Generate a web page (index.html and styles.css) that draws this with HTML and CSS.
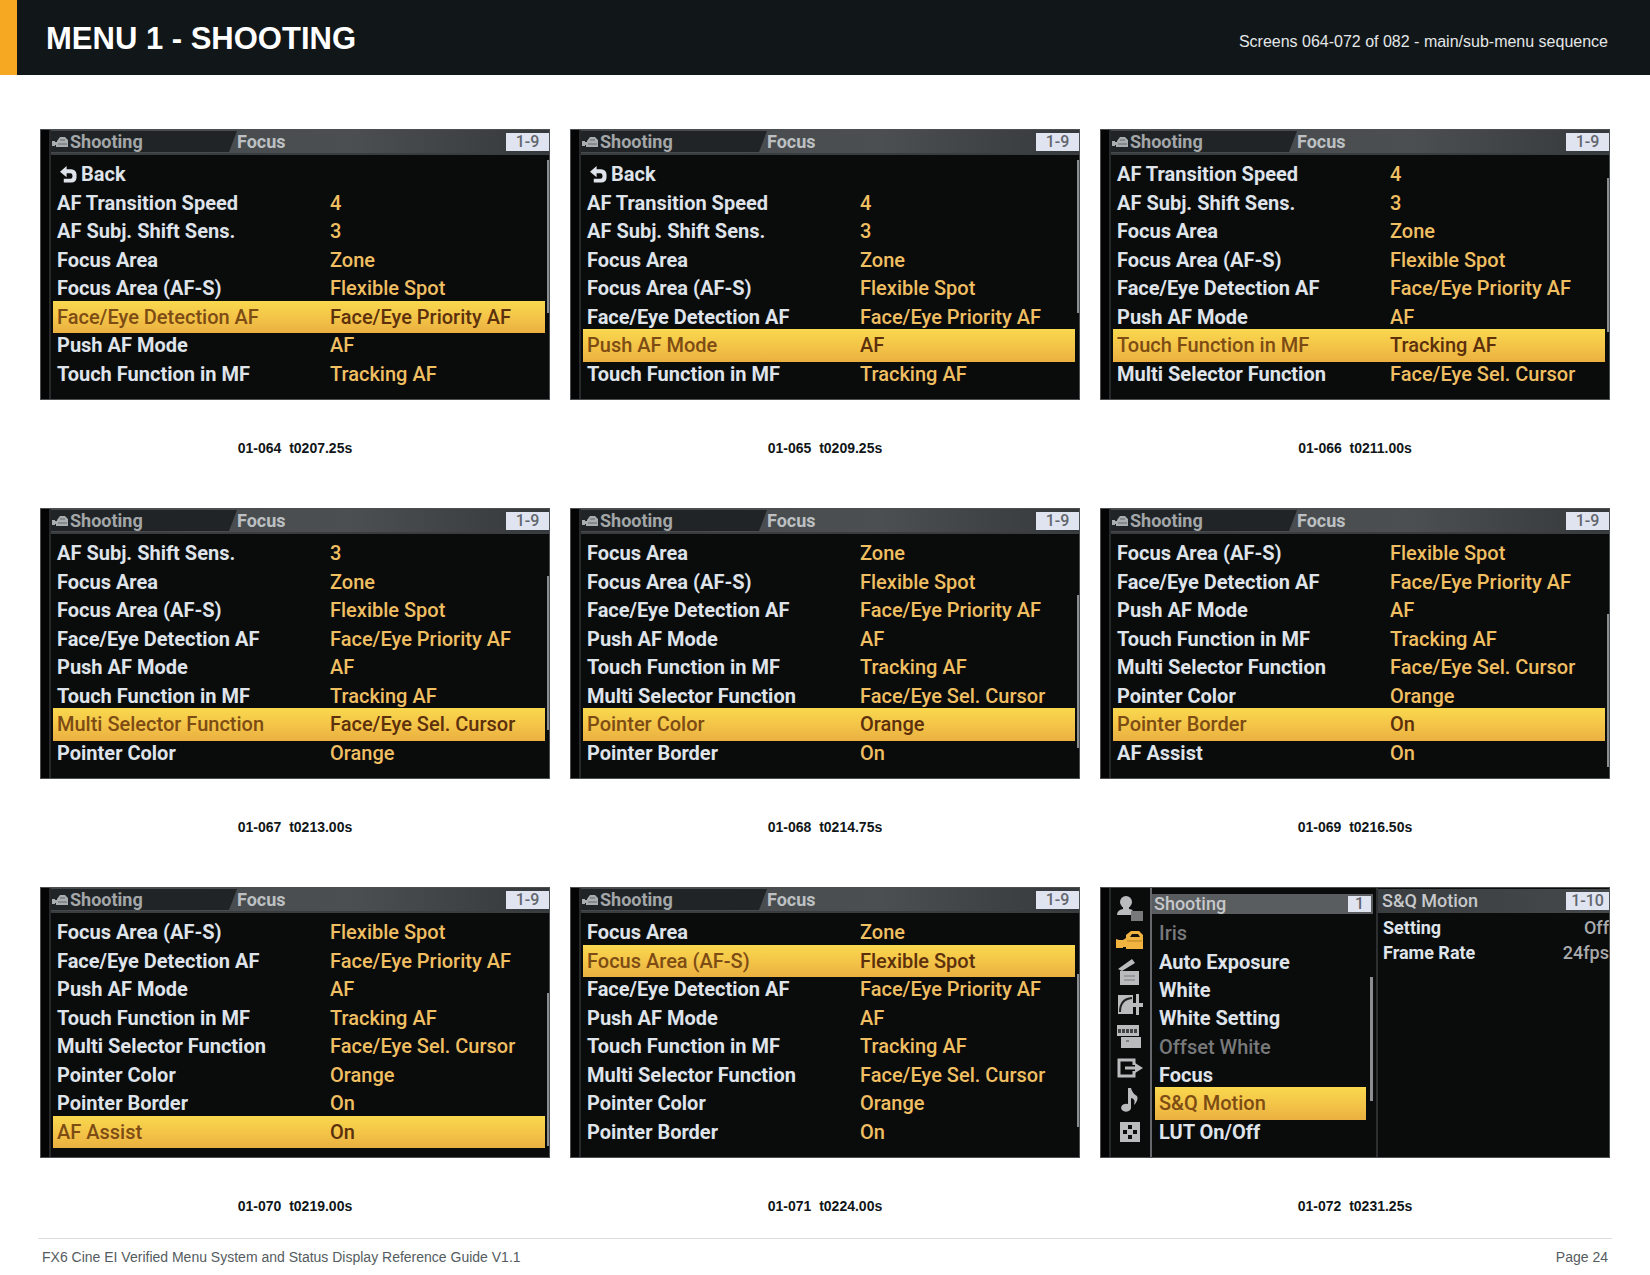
FILE: index.html
```html
<!DOCTYPE html>
<html lang="en">
<head>
<meta charset="utf-8">
<meta name="viewport" content="width=device-width, initial-scale=1">
<title>Menu 1 - Shooting</title>
<link rel="stylesheet" href="styles.css">
</head>
<body>
<svg width="0" height="0" class="defs" aria-hidden="true">
  <symbol id="cam" viewBox="0 0 17 12"><path d="M1 5h3v1h2V5l3-4h5l3 3v7H5V9H4v1H1z" fill="#a9adaf"/><path d="M9 4h5M7 8h9" stroke="#63676a" fill="none"/></symbol>
  <symbol id="back" viewBox="0 0 18 18"><path d="M0 6l7-6v3.500h5a5.500 5.500 0 0 1 5.500 5.500v3.500a5.500 5.500 0 0 1-5.500 5H4v-4h7a2.200 2.200 0 0 0 2.200-2.200V10a2.200 2.200 0 0 0-2.200-2.200H7V12z" fill="#dfe3ea"/></symbol>
</svg>

<header class="top">
  <h1>MENU 1 - SHOOTING</h1>
  <p>Screens 064-072 of 082 - main/sub-menu sequence</p>
</header>

<main class="sheet">
  <figure>
    <div class="screen">
      <div class="bar"><div class="tab"><svg class="cam"><use href="#cam"/></svg>Shooting</div><span class="sub">Focus</span><span class="badge">1-9</span></div>
      <ul class="rows">
        <li class="back"><svg><use href="#back"/></svg>Back</li>
        <li><span>AF Transition Speed</span><b>4</b></li>
        <li><span>AF Subj. Shift Sens.</span><b>3</b></li>
        <li><span>Focus Area</span><b>Zone</b></li>
        <li><span>Focus Area (AF-S)</span><b>Flexible Spot</b></li>
        <li class="on"><span>Face/Eye Detection AF</span><b>Face/Eye Priority AF</b></li>
        <li><span>Push AF Mode</span><b>AF</b></li>
        <li><span>Touch Function in MF</span><b>Tracking AF</b></li>
      </ul>
      <i class="scroll s0"></i>
    </div>
    <figcaption>01-064&nbsp; t0207.25s</figcaption>
  </figure>

  <figure>
    <div class="screen">
      <div class="bar"><div class="tab"><svg class="cam"><use href="#cam"/></svg>Shooting</div><span class="sub">Focus</span><span class="badge">1-9</span></div>
      <ul class="rows">
        <li class="back"><svg><use href="#back"/></svg>Back</li>
        <li><span>AF Transition Speed</span><b>4</b></li>
        <li><span>AF Subj. Shift Sens.</span><b>3</b></li>
        <li><span>Focus Area</span><b>Zone</b></li>
        <li><span>Focus Area (AF-S)</span><b>Flexible Spot</b></li>
        <li><span>Face/Eye Detection AF</span><b>Face/Eye Priority AF</b></li>
        <li class="on"><span>Push AF Mode</span><b>AF</b></li>
        <li><span>Touch Function in MF</span><b>Tracking AF</b></li>
      </ul>
      <i class="scroll s0"></i>
    </div>
    <figcaption>01-065&nbsp; t0209.25s</figcaption>
  </figure>

  <figure>
    <div class="screen">
      <div class="bar"><div class="tab"><svg class="cam"><use href="#cam"/></svg>Shooting</div><span class="sub">Focus</span><span class="badge">1-9</span></div>
      <ul class="rows">
        <li><span>AF Transition Speed</span><b>4</b></li>
        <li><span>AF Subj. Shift Sens.</span><b>3</b></li>
        <li><span>Focus Area</span><b>Zone</b></li>
        <li><span>Focus Area (AF-S)</span><b>Flexible Spot</b></li>
        <li><span>Face/Eye Detection AF</span><b>Face/Eye Priority AF</b></li>
        <li><span>Push AF Mode</span><b>AF</b></li>
        <li class="on"><span>Touch Function in MF</span><b>Tracking AF</b></li>
        <li><span>Multi Selector Function</span><b>Face/Eye Sel. Cursor</b></li>
      </ul>
      <i class="scroll s1"></i>
    </div>
    <figcaption>01-066&nbsp; t0211.00s</figcaption>
  </figure>

  <figure>
    <div class="screen">
      <div class="bar"><div class="tab"><svg class="cam"><use href="#cam"/></svg>Shooting</div><span class="sub">Focus</span><span class="badge">1-9</span></div>
      <ul class="rows">
        <li><span>AF Subj. Shift Sens.</span><b>3</b></li>
        <li><span>Focus Area</span><b>Zone</b></li>
        <li><span>Focus Area (AF-S)</span><b>Flexible Spot</b></li>
        <li><span>Face/Eye Detection AF</span><b>Face/Eye Priority AF</b></li>
        <li><span>Push AF Mode</span><b>AF</b></li>
        <li><span>Touch Function in MF</span><b>Tracking AF</b></li>
        <li class="on"><span>Multi Selector Function</span><b>Face/Eye Sel. Cursor</b></li>
        <li><span>Pointer Color</span><b>Orange</b></li>
      </ul>
      <i class="scroll s2"></i>
    </div>
    <figcaption>01-067&nbsp; t0213.00s</figcaption>
  </figure>

  <figure>
    <div class="screen">
      <div class="bar"><div class="tab"><svg class="cam"><use href="#cam"/></svg>Shooting</div><span class="sub">Focus</span><span class="badge">1-9</span></div>
      <ul class="rows">
        <li><span>Focus Area</span><b>Zone</b></li>
        <li><span>Focus Area (AF-S)</span><b>Flexible Spot</b></li>
        <li><span>Face/Eye Detection AF</span><b>Face/Eye Priority AF</b></li>
        <li><span>Push AF Mode</span><b>AF</b></li>
        <li><span>Touch Function in MF</span><b>Tracking AF</b></li>
        <li><span>Multi Selector Function</span><b>Face/Eye Sel. Cursor</b></li>
        <li class="on"><span>Pointer Color</span><b>Orange</b></li>
        <li><span>Pointer Border</span><b>On</b></li>
      </ul>
      <i class="scroll s3"></i>
    </div>
    <figcaption>01-068&nbsp; t0214.75s</figcaption>
  </figure>

  <figure>
    <div class="screen">
      <div class="bar"><div class="tab"><svg class="cam"><use href="#cam"/></svg>Shooting</div><span class="sub">Focus</span><span class="badge">1-9</span></div>
      <ul class="rows">
        <li><span>Focus Area (AF-S)</span><b>Flexible Spot</b></li>
        <li><span>Face/Eye Detection AF</span><b>Face/Eye Priority AF</b></li>
        <li><span>Push AF Mode</span><b>AF</b></li>
        <li><span>Touch Function in MF</span><b>Tracking AF</b></li>
        <li><span>Multi Selector Function</span><b>Face/Eye Sel. Cursor</b></li>
        <li><span>Pointer Color</span><b>Orange</b></li>
        <li class="on"><span>Pointer Border</span><b>On</b></li>
        <li><span>AF Assist</span><b>On</b></li>
      </ul>
      <i class="scroll s4"></i>
    </div>
    <figcaption>01-069&nbsp; t0216.50s</figcaption>
  </figure>

  <figure>
    <div class="screen">
      <div class="bar"><div class="tab"><svg class="cam"><use href="#cam"/></svg>Shooting</div><span class="sub">Focus</span><span class="badge">1-9</span></div>
      <ul class="rows">
        <li><span>Focus Area (AF-S)</span><b>Flexible Spot</b></li>
        <li><span>Face/Eye Detection AF</span><b>Face/Eye Priority AF</b></li>
        <li><span>Push AF Mode</span><b>AF</b></li>
        <li><span>Touch Function in MF</span><b>Tracking AF</b></li>
        <li><span>Multi Selector Function</span><b>Face/Eye Sel. Cursor</b></li>
        <li><span>Pointer Color</span><b>Orange</b></li>
        <li><span>Pointer Border</span><b>On</b></li>
        <li class="on"><span>AF Assist</span><b>On</b></li>
      </ul>
      <i class="scroll s4"></i>
    </div>
    <figcaption>01-070&nbsp; t0219.00s</figcaption>
  </figure>

  <figure>
    <div class="screen">
      <div class="bar"><div class="tab"><svg class="cam"><use href="#cam"/></svg>Shooting</div><span class="sub">Focus</span><span class="badge">1-9</span></div>
      <ul class="rows">
        <li><span>Focus Area</span><b>Zone</b></li>
        <li class="on"><span>Focus Area (AF-S)</span><b>Flexible Spot</b></li>
        <li><span>Face/Eye Detection AF</span><b>Face/Eye Priority AF</b></li>
        <li><span>Push AF Mode</span><b>AF</b></li>
        <li><span>Touch Function in MF</span><b>Tracking AF</b></li>
        <li><span>Multi Selector Function</span><b>Face/Eye Sel. Cursor</b></li>
        <li><span>Pointer Color</span><b>Orange</b></li>
        <li><span>Pointer Border</span><b>On</b></li>
      </ul>
      <i class="scroll s3"></i>
    </div>
    <figcaption>01-071&nbsp; t0224.00s</figcaption>
  </figure>

  <figure>
    <div class="screen split">
      <div class="rail">
        <svg viewBox="0 0 28 28"><circle cx="10" cy="8" r="6"/><path d="M1 21q0-5 6-6v-4h6v4q3 0 4 2h-2v4z"/><path d="M15 17h12v10H15z" fill="#77797a"/></svg>
        <svg viewBox="0 0 28 28" class="hot"><path d="M0 13l3 1h4l3-2V9l5-4h8l4 4v14H10v-2H7v1H0z"/><path d="M14 11l2-3h6l2 3z" fill="#15130c"/><path d="M11 15h15" stroke="#b5801e"/></svg>
        <svg viewBox="0 0 28 28"><path d="M2 11L16 1l3 4L6 13zM4 13h19v14H4z"/><path d="M8 18h11M8 22h11" stroke="#77797a"/></svg>
        <svg viewBox="0 0 28 28"><path d="M2 5h15v19H2zM20 4h3v9h4v4h-4v8h-3v-8h-3v-4h3z"/><path d="M4 22Q4 9 16 8" stroke="#222" stroke-width="2" fill="none"/></svg>
        <svg viewBox="0 0 28 28"><path d="M1 3h22v11H1zM5 15h20v11H5z"/><path d="M2 9h20" stroke="#444" stroke-width="4" stroke-dasharray="3 1"/><path d="M10 19h3" stroke="#444"/></svg>
        <svg viewBox="0 0 28 28"><path d="M18 11V6H3v16h15v-5M9 14h13" fill="none" stroke="#b9bbbd" stroke-width="3"/><path d="M19 9l8 5-8 5z"/></svg>
        <svg viewBox="0 0 28 28"><path d="M12 2h3q1 5 6 8 2 4-3 9 2-6-3-7v9a5 4 0 1 1-3-3z"/></svg>
        <svg viewBox="0 0 28 28"><path d="M4 4h20v20H4z"/><path d="M12 7h4v4h-4zM7 12h4v4H7zM17 12h4v4h-4zM12 17h4v4h-4z" fill="#0c0c0d"/></svg>
      </div>
      <div class="menu">
        <div class="menu-head">Shooting<span class="badge">1</span></div>
        <ul>
          <li class="off">Iris</li>
          <li>Auto Exposure</li>
          <li>White</li>
          <li>White Setting</li>
          <li class="off">Offset White</li>
          <li>Focus</li>
          <li class="on">S&amp;Q Motion</li>
          <li>LUT On/Off</li>
        </ul>
        <i class="menu-scroll"></i>
      </div>
      <div class="detail">
        <div class="detail-head">S&amp;Q Motion<span class="badge">1-10</span></div>
        <p><span>Setting</span><b>Off</b></p>
        <p><span>Frame Rate</span><b>24fps</b></p>
      </div>
    </div>
    <figcaption>01-072&nbsp; t0231.25s</figcaption>
  </figure>
</main>

<footer>
  <span>FX6 Cine EI Verified Menu System and Status Display Reference Guide V1.1</span>
  <span>Page 24</span>
</footer>
</body>
</html>
```
FILE: styles.css
```css
* { box-sizing: border-box; }
body {
  margin: 0;
  background: #fff;
  color: #111618;
  font-family: "Liberation Sans", Arial, sans-serif;
}
h1, p, ul, figure { margin: 0; padding: 0; }
ul { list-style: none; }
.defs { position: absolute; }

.top {
  display: flex;
  align-items: center;
  justify-content: space-between;
  height: 75px;
  padding: 0 42px 0 29px;
  border-left: 17px solid #f7a823;
  background: #111618;
  color: #fff;
}
.top h1 { font-size: 31px; line-height: 36px; padding-top: 2px; }
.top p { font-size: 16px; line-height: 20px; padding-top: 8px; color: #e4e7e8; }

.sheet {
  display: grid;
  grid-template-columns: repeat(3, minmax(0, 1fr));
  gap: 51px 20px;
  padding: 54px 40px 23px;
}
figcaption {
  margin-top: 39px;
  font-size: 14px;
  line-height: 18px;
  font-weight: 700;
  text-align: center;
}

.screen {
  position: relative;
  display: flex;
  flex-direction: column;
  aspect-ratio: 510 / 271;
  overflow: hidden;
  padding-left: 10px;
  border: 1px solid #4b4f51;
  background: linear-gradient(90deg, #050505 8px, #26282a 8px, #26282a 10px, #0a0b0b 10px);
  color: #dfe3ea;
  font-family: Roboto, "Liberation Sans", sans-serif;
  font-size: 20px;
  font-weight: 700;
}
.bar {
  display: flex;
  align-items: center;
  height: 25px;
  border-bottom: 2px solid #3a3d3f;
  background: linear-gradient(90deg, #45494b, #4b4f51 60%, #36393b);
  color: #bdc0c3;
  font-size: 18px;
  line-height: 22px;
}
.tab {
  display: flex;
  align-items: center;
  gap: 2px;
  width: 186px;
  height: 21px;
  background: #212426;
  clip-path: polygon(0 0, 100% 0, 178px 100%, 0 100%);
  color: #a3a7a9;
}
.cam { width: 17px; height: 12px; }
.badge {
  margin-left: auto;
  min-width: 43px;
  height: 18px;
  background: #dfe4f0;
  color: #63666c;
  font-size: 16px;
  font-weight: 500;
  line-height: 18px;
  text-align: center;
}
.rows {
  flex: 1;
  display: grid;
  grid-template-rows: repeat(8, minmax(0, 1fr));
  padding: 5px 4px 11px 2px;
}
.rows li {
  display: grid;
  grid-template-columns: 273px 1fr;
  align-items: center;
  padding-left: 4px;
  white-space: nowrap;
  line-height: 24px;
}
.rows .back { display: flex; gap: 4px; padding-left: 7px; }
.back svg { width: 17px; height: 17px; }
.rows b { color: #efbf62; font-weight: 500; }
.rows .on, .menu .on {
  margin: -2px 0;
  background: linear-gradient(#f9d84e, #f4c548 50%, #eab040);
  color: #7d4c14;
  font-weight: 500;
}
.rows .on b { color: #5c300c; }
.scroll {
  position: absolute;
  right: 0;
  width: 2px;
  height: 57%;
  background: #8b8f91;
}
.s0 { top: 11%; }
.s1 { top: 18%; }
.s2 { top: 25%; }
.s3 { top: 32%; }
.s4 { top: 39%; }

.split { flex-direction: row; }
.rail {
  display: flex;
  flex-direction: column;
  justify-content: space-between;
  width: 41px;
  padding: 6px 6px 11px 5px;
  border-right: 2px solid #66696b;
}
.rail svg { width: 28px; height: 28px; fill: #b9bbbd; }
.rail .hot { fill: #f2b440; }
.menu {
  position: relative;
  display: flex;
  flex-direction: column;
  width: 226px;
  padding: 6px 3px 11px 0;
  border-right: 2px solid #2c2e30;
}
.menu-head, .detail-head {
  display: flex;
  align-items: center;
  color: #c6c8cb;
  font-size: 18px;
  font-weight: 500;
  line-height: 20px;
}
.menu-head { height: 20px; padding: 0 2px; background: #5a5d60; }
.menu-head .badge { min-width: 23px; height: 16px; line-height: 16px; }
.menu ul {
  flex: 1;
  display: grid;
  grid-template-rows: repeat(8, minmax(0, 1fr));
  padding: 5px 7px 0 3px;
}
.menu li { display: flex; align-items: center; padding-left: 4px; line-height: 24px; white-space: nowrap; }
.menu .off { color: #77797a; font-weight: 500; }
.menu-scroll {
  position: absolute;
  right: 3px;
  top: 33%;
  width: 3px;
  height: 46%;
  background: #8b8f91;
}
.detail { flex: 1; display: flex; flex-direction: column; padding-top: 1px; }
.detail-head { height: 24px; padding-left: 4px; margin-bottom: 2px; background: linear-gradient(90deg, #3a3d3f, #45494b); }
.detail p {
  display: flex;
  justify-content: space-between;
  padding-left: 5px;
  font-size: 18px;
  line-height: 25px;
}
.detail b { color: #a9abad; font-weight: 500; }

footer {
  display: flex;
  justify-content: space-between;
  margin: 0 38px;
  padding: 9px 4px;
  border-top: 1px solid #dcdfe0;
  color: #545c60;
  font-size: 14px;
  line-height: 18px;
}
```
